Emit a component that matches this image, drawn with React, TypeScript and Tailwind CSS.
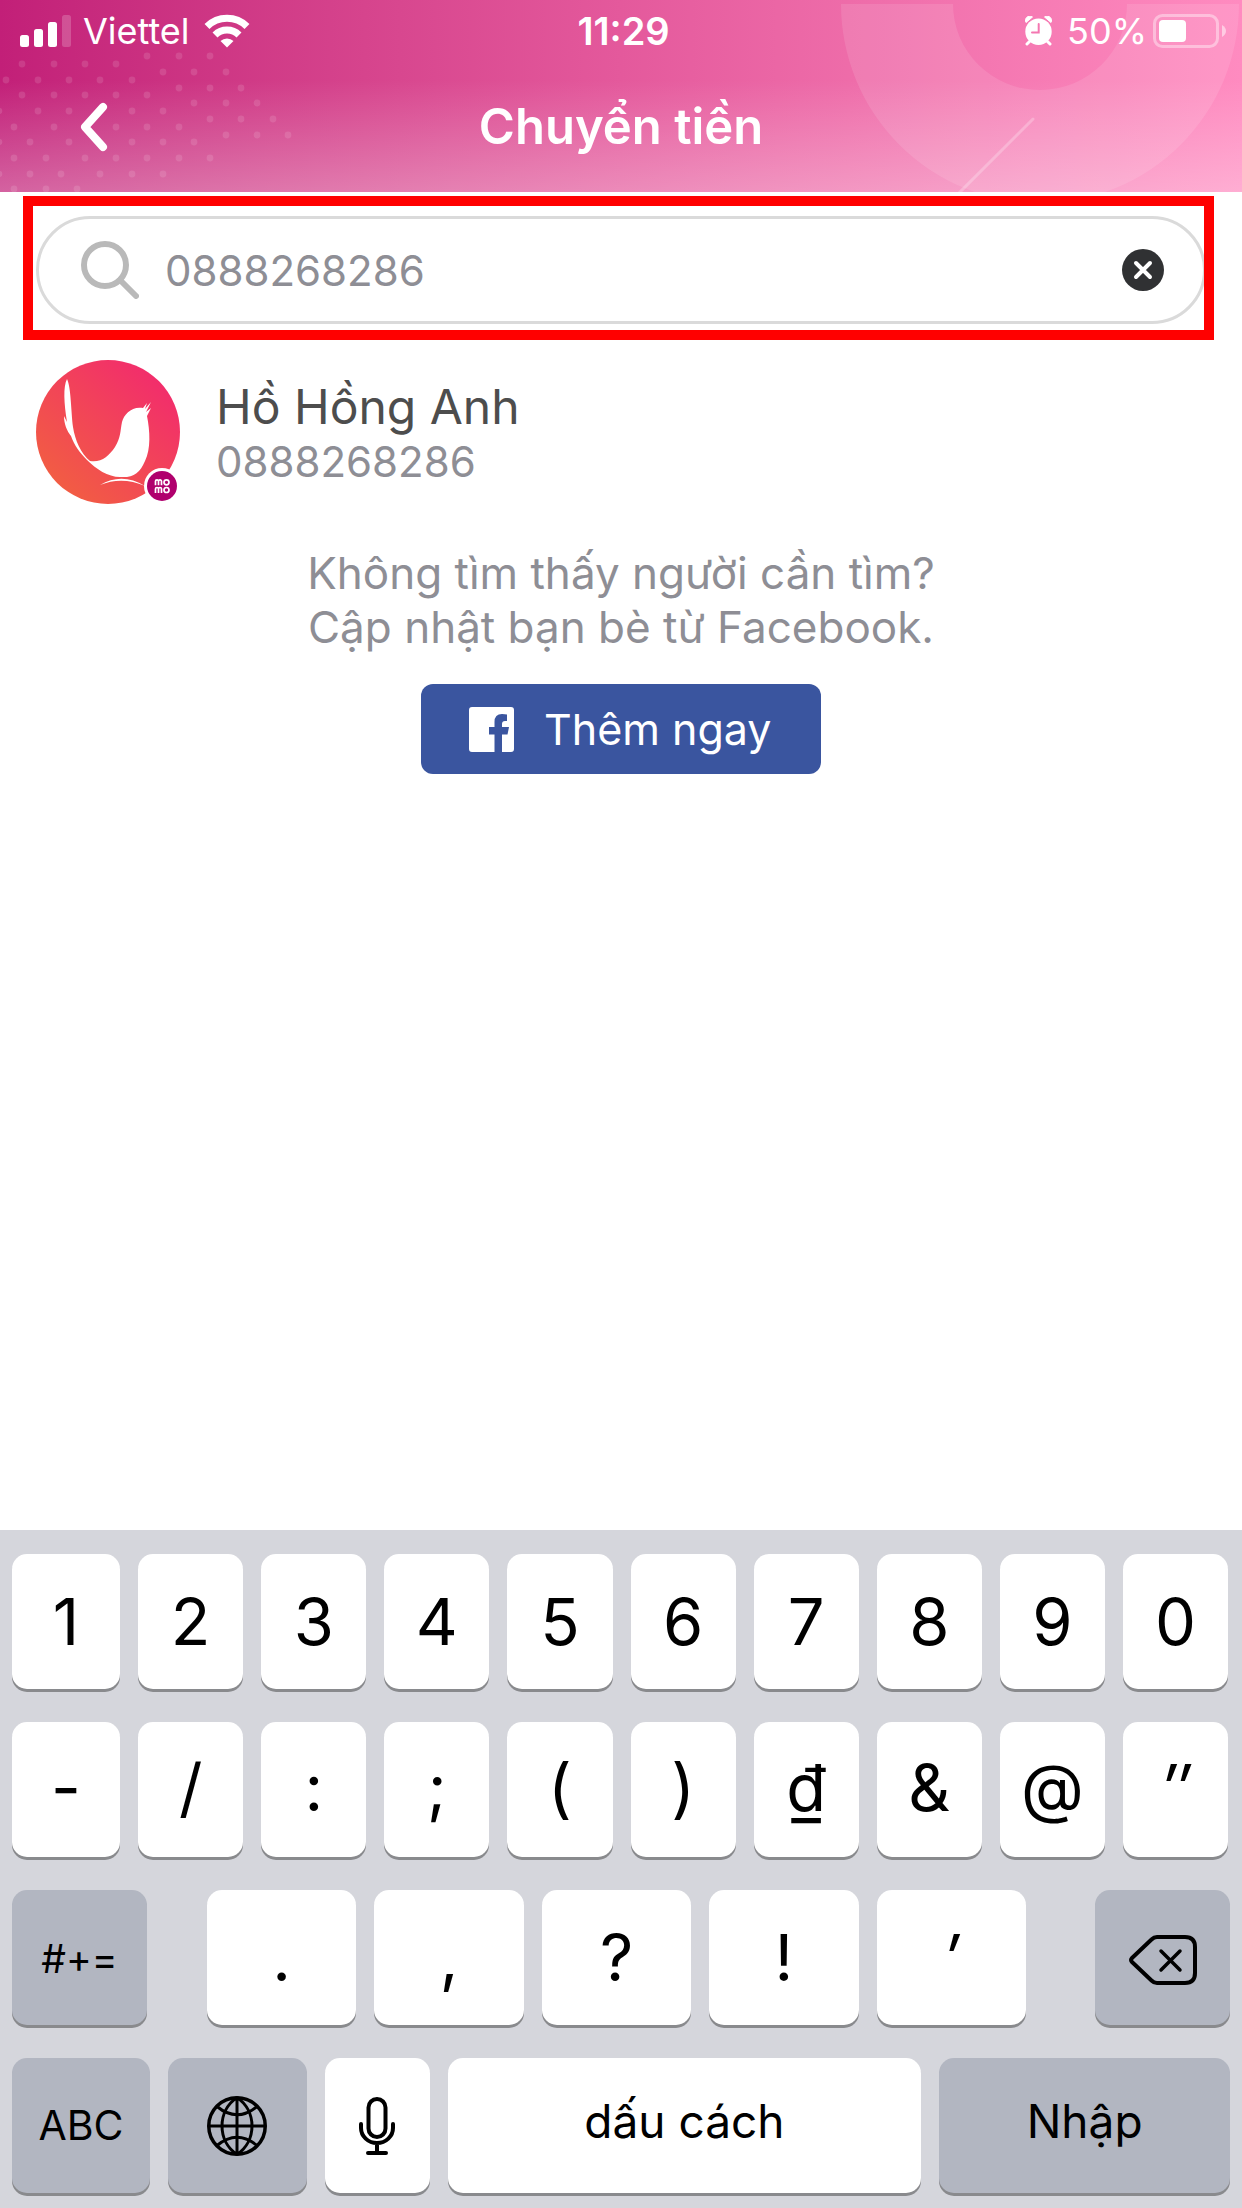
import { useState } from "react";
import type { ReactNode } from "react";

const DOT_ROWS: [number, number[]][] = [
  [56, [147, 179, 210]],
  [64, [22, 54, 85, 116]],
  [72, [163, 194, 226]],
  [80, [6, 38, 69, 100, 132]],
  [88, [179, 210, 241]],
  [95, [22, 54, 85, 116, 147]],
  [103, [194, 226, 257]],
  [111, [-1, 38, 69, 132, 163]],
  [119, [210, 241, 273]],
  [127, [14, 54, 116, 147, 179]],
  [135, [226, 257, 288]],
  [142, [-1, 30, 69, 132, 163, 194]],
  [158, [14, 46, 85, 116, 147, 179, 210]],
  [174, [-1, 30, 61, 100, 132, 163]],
  [189, [14, 46, 77]],
];

function HeaderBackdrop() {
  return (
    <div aria-hidden="true" className="absolute inset-0 overflow-hidden">
      <svg className="absolute left-0 top-0" width="300" height="192" viewBox="0 0 300 192" fill="#fff" fillOpacity="0.12">
        {DOT_ROWS.map(([y, xs]) => xs.map((x) => <circle key={`${x}-${y}`} cx={x} cy={y} r="3.4" />))}
      </svg>
      <svg className="absolute right-0 top-0" width="422" height="192" viewBox="0 0 422 192" fill="none">
        <path d="M21 4a199 199 0 0 0 398 0H307a87 86 0 0 1-174 0Z" fill="#fff" fillOpacity="0.11" />
        <path d="M213 119 138 194" stroke="#fff" strokeOpacity="0.25" strokeWidth="3" strokeLinecap="round" />
      </svg>
      <div className="absolute inset-x-0 bottom-0 h-28 bg-linear-to-b from-white/0 to-white/30" />
    </div>
  );
}

function StatusBar() {
  return (
    <div className="relative grid h-[62px] grid-cols-[1fr_auto_1fr] items-center pl-5 pr-[15px] text-[36px] leading-none">
      <div className="flex items-center">
        <svg width="51" height="32" viewBox="0 0 51 32" fill="#fff" aria-label="Signal">
          <rect x="0" y="20" width="9" height="12" rx="2.5" />
          <rect x="14" y="14" width="9" height="18" rx="2.5" />
          <rect x="28" y="7" width="9" height="25" rx="2.5" />
          <rect x="42" y="0" width="9" height="32" rx="2.5" fillOpacity="0.2" />
        </svg>
        <span className="ml-3">Viettel</span>
        <svg className="ml-[14px]" width="46" height="34" viewBox="0 0 46 34" aria-label="Wi-Fi">
          <g fill="none" stroke="#fff" strokeWidth="7">
            <path d="M3 12.500A28.500 28.500 0 0 1 43 12.500" />
            <path d="M11 21A17 17 0 0 1 35 21" />
          </g>
          <path d="M16.500 27A9.500 9.500 0 0 1 29.500 27L23 33.500Z" fill="#fff" />
        </svg>
      </div>
      <span className="text-[38px] font-semibold">11:29</span>
      <div className="flex items-center justify-end">
        <svg width="28" height="30" viewBox="0 0 28 30" aria-label="Alarm">
          <circle cx="13.500" cy="15.700" r="13.200" fill="#fff" />
          <path d="M1 6.500C-1 2.500 3-1.500 7.500 1ZM26 6.500C28 2.500 24-1.500 19.500 1Z" fill="#fff" stroke="#fff" strokeLinejoin="round" />
          <path d="m4.500 25.500-2.500 2.500M22.500 25.500l2.500 2.500" stroke="#fff" strokeWidth="3" strokeLinecap="round" />
          <path d="M13.700 8v8.500H7" fill="none" stroke="#f477b1" strokeWidth="2" strokeLinecap="round" />
        </svg>
        <span className="ml-3.5">50%</span>
        <svg className="ml-1.5" width="74" height="34" viewBox="0 0 74 34" aria-label="Battery">
          <rect x="1.500" y="1.500" width="63" height="31" rx="8" fill="none" stroke="#fff" strokeOpacity="0.4" strokeWidth="3" />
          <rect x="6" y="6" width="27" height="22" rx="4" fill="#fff" />
          <path d="M69 11q4 2.500 4 6t-4 6Z" fill="#fff" fillOpacity="0.5" />
        </svg>
      </div>
    </div>
  );
}

function Header() {
  return (
    <header className="relative bg-linear-to-r from-[#c21f78] via-[#e4599c] to-[#ff8bc0] text-white">
      <HeaderBackdrop />
      <StatusBar />
      <div className="relative grid h-[130px] grid-cols-[1fr_auto_1fr] items-center px-[70px]">
        <button type="button" aria-label="Back" className="flex h-[68px] w-12 items-center justify-center">
          <svg width="28" height="50" viewBox="0 0 28 50" fill="none" stroke="#fff" strokeWidth="8" strokeLinecap="round" strokeLinejoin="round">
            <path d="M23 5 5 25l18 20" />
          </svg>
        </button>
        <h1 className="text-[49px] font-semibold leading-[68px]">Chuyển tiền</h1>
      </div>
    </header>
  );
}

function SearchField() {
  const [query, setQuery] = useState("0888268286");
  return (
    <div className="relative mx-9 mt-6">
      <div className="flex h-[108px] items-center rounded-full border-3 border-[#dadada] pl-[42px] pr-[39px]">
        <svg width="58" height="58" viewBox="0 0 58 58" fill="none" stroke="#b9b9b9" strokeWidth="6" strokeLinecap="round" aria-hidden="true">
          <circle cx="24" cy="24" r="21" />
          <path d="m39 39 16 16" />
        </svg>
        <input
          type="text"
          aria-label="Tìm kiếm"
          value={query}
          onChange={(e) => setQuery(e.target.value)}
          className="ml-[26px] min-w-0 flex-1 bg-transparent text-[42px] text-[#8e8e95] outline-none"
        />
        <button type="button" aria-label="Xóa" onClick={() => setQuery("")}>
          <svg width="42" height="42" viewBox="0 0 42 42" fill="none">
            <circle cx="21" cy="21" r="21" fill="#303133" />
            <path d="m14 14 14 14M28 14 14 28" stroke="#fff" strokeWidth="4" strokeLinecap="round" />
          </svg>
        </button>
      </div>
      <div aria-hidden="true" className="pointer-events-none absolute -bottom-4 -left-[13px] -right-2 -top-5 border-10 border-[#ff0000]" />
    </div>
  );
}

function Avatar() {
  return (
    <svg width="144" height="144" viewBox="0 0 144 144" aria-hidden="true">
      <defs>
        <linearGradient id="avatar-bg" x1="20" y1="130" x2="120" y2="20" gradientUnits="userSpaceOnUse">
          <stop offset="0" stopColor="#f25e42" />
          <stop offset="1" stopColor="#f22e6b" />
        </linearGradient>
      </defs>
      <circle cx="72" cy="72" r="72" fill="url(#avatar-bg)" />
      <path
        fill="#fff"
        d="M31 19C27 27 28 43 31 62L28 56C28 64 31 71 35 76 38 85 44 93 51 100 60 109 72 117 84 117 97 118 104 113 109 101 115 89 114 71 111 56L115 48 110 52 115 42 109 49 111 43 107 48C96 46 88 54 86 62 84 72 85 77 79 87 73 96 65 103 54 101 45 94 39 80 37 67 35 50 35 27 31 19Z"
      />
      <path d="M64 125Q86 112 109 126 86 116 64 125Z" fill="#fff" />
      <circle cx="126" cy="126" r="18" fill="#fff" />
      <circle cx="126" cy="126" r="15" fill="#b0006d" />
      <g fill="none" stroke="#fff" strokeWidth="1.700">
        <path d="M119.500 125.300v-4a1.500 1.500 0 0 1 3 0v4v-4a1.500 1.500 0 0 1 3 0v4" />
        <circle cx="130.500" cy="122.300" r="2.500" />
        <path d="M119.500 133v-4a1.500 1.500 0 0 1 3 0v4v-4a1.500 1.500 0 0 1 3 0v4" />
        <circle cx="130.500" cy="130" r="2.500" />
      </g>
    </svg>
  );
}

function Contact() {
  return (
    <button type="button" className="mt-9 flex items-center px-9 text-left">
      <Avatar />
      <span className="ml-9 flex flex-col">
        <span className="text-[48px] leading-[60px] text-[#4d4d4d]">Hồ Hồng Anh</span>
        <span className="text-[42px] leading-[50px] text-[#8e8e95]">0888268286</span>
      </span>
    </button>
  );
}

function FacebookPrompt() {
  return (
    <section className="mt-[42px] flex flex-col items-center">
      <p className="text-center text-[44px] leading-[54px] text-[#8e8e95]">
        Không tìm thấy người cần tìm?
        <br />
        Cập nhật bạn bè từ Facebook.
      </p>
      <button type="button" className="mt-[30px] flex h-[90px] w-[400px] items-center rounded-xl bg-[#3a559f] pl-12 text-[43px] text-white">
        <svg width="45" height="45" viewBox="0 0 45 45" aria-hidden="true">
          <path
            fill="#fff"
            fillRule="evenodd"
            d="M3 0H42a3 3 0 0 1 3 3V42a3 3 0 0 1-3 3H33V27.500h5.500L40 20H33v-3q0-3 3-3h2V7.500q-2-.5-5-.5-7.500 0-7.500 8v5H20v7.500h5.500V45H3a3 3 0 0 1-3-3V3a3 3 0 0 1 3-3Z"
          />
        </svg>
        <span className="ml-[30px]">Thêm ngay</span>
      </button>
    </section>
  );
}

function Key({ children, label, className = "" }: { children: ReactNode; label?: string; className?: string }) {
  return (
    <button
      type="button"
      aria-label={label}
      className={`flex h-[135px] min-w-0 items-center justify-center rounded-[15px] text-black shadow-[0_3px_0_#898a8d] ${className}`}
    >
      {children}
    </button>
  );
}

const LIGHT = "bg-white text-[65px]";
const SYMBOL = "bg-white pb-1 text-[65px]";
const DARK = "bg-[#b2b6c1]";

function DeleteIcon() {
  return (
    <svg width="68" height="50" viewBox="0 0 68 50" fill="none" stroke="#000" strokeWidth="4" strokeLinecap="round" strokeLinejoin="round">
      <path d="M28 2H56q10 0 10 10V38q0 10-10 10H28q-3 0-5.500-2.500L3 27q-2-2 0-4L22.500 4.500Q25 2 28 2Z" />
      <path d="m32 16 19 19M51 16 32 35" strokeWidth="3.500" />
    </svg>
  );
}

function GlobeIcon() {
  return (
    <svg width="60" height="60" viewBox="0 0 60 60" fill="none" stroke="#000" strokeWidth="3.500">
      <circle cx="30" cy="30" r="28.250" />
      <path d="M30 1V59M1 30H59M30 1.500C10 15 10 45 30 58.500M30 1.500C50 15 50 45 30 58.500" strokeWidth="3" />
      <path d="M10 10.500Q30 27 50 10.500M10 49.500Q30 33 50 49.500" strokeWidth="3" />
    </svg>
  );
}

function MicIcon() {
  return (
    <svg width="36" height="58" viewBox="0 0 36 58" fill="none" stroke="#000" strokeWidth="4" strokeLinecap="round">
      <rect x="9.500" y="2" width="17" height="38" rx="8.500" />
      <path d="M2 27v4a16 15 0 0 0 32 0v-4M18 47v8M9 56h18" />
    </svg>
  );
}

function Keyboard() {
  return (
    <div className="flex flex-col gap-[33px] bg-[#d5d6dc] pb-[15px] pl-3 pr-3.5 pt-6">
      <div className="grid grid-cols-[108fr_repeat(9,105fr)] gap-x-[18px]">
        {["1", "2", "3", "4", "5", "6", "7", "8", "9", "0"].map((k) => (
          <Key key={k} className={LIGHT}>{k}</Key>
        ))}
      </div>
      <div className="grid grid-cols-[108fr_repeat(9,105fr)] gap-x-[18px]">
        {["-", "/", ":", ";", "(", ")", "₫", "&", "@"].map((k) => (
          <Key key={k} className={SYMBOL}>{k}</Key>
        ))}
        <Key className={SYMBOL}>
          <span className="italic">″</span>
        </Key>
      </div>
      <div className="-mr-0.5 grid grid-cols-[135fr_948fr_135fr]">
        <Key className="bg-[#b2b6c1] pt-1 text-[39px]">#+=</Key>
        <div className="grid grid-cols-5 gap-x-[18px] pl-[60px] pr-[69px]">
          {[".", ",", "?", "!"].map((k) => (
            <Key key={k} className={LIGHT}>{k}</Key>
          ))}
          <Key className={LIGHT}>
            <span className="italic">′</span>
          </Key>
        </div>
        <Key label="Xóa lùi" className="bg-[#b2b6c1] pt-1">
          <DeleteIcon />
        </Key>
      </div>
      <div className="-mr-0.5 grid grid-cols-[138fr_139fr_105fr_474fr_291fr] gap-x-[18px]">
        <Key className="bg-[#b2b6c1] text-[41px]">ABC</Key>
        <Key label="Đổi bàn phím" className={DARK}>
          <GlobeIcon />
        </Key>
        <Key label="Đọc chính tả" className={LIGHT}>
          <MicIcon />
        </Key>
        <Key className="bg-white pb-2 text-[46px]">dấu cách</Key>
        <Key className="bg-[#b2b6c1] pb-2 text-[46px]">Nhập</Key>
      </div>
    </div>
  );
}

export default function App() {
  return (
    <div className="flex min-h-screen flex-col bg-white font-['Inter','Noto_Sans',sans-serif]">
      <Header />
      <main className="flex flex-1 flex-col">
        <SearchField />
        <Contact />
        <FacebookPrompt />
      </main>
      <Keyboard />
    </div>
  );
}
